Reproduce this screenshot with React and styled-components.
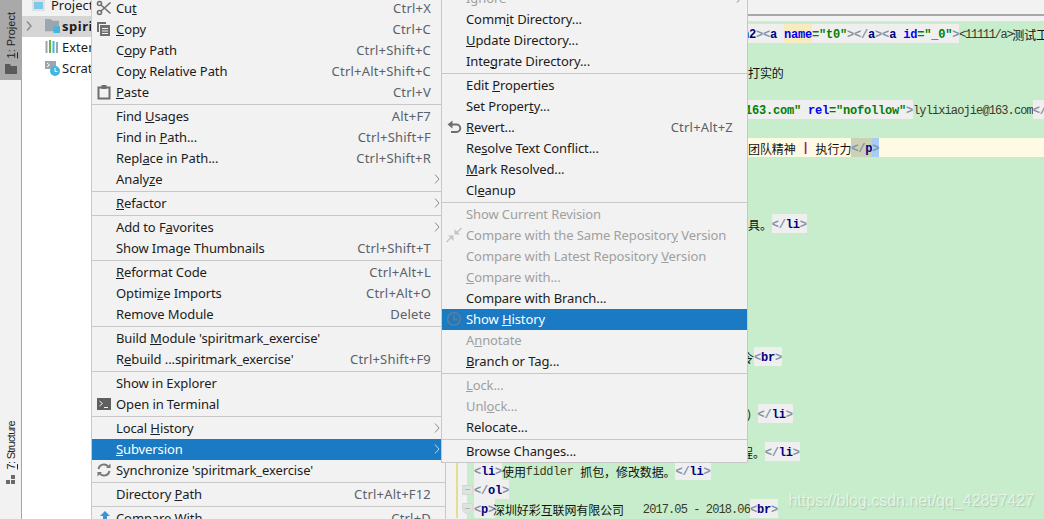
import React from 'react'
import styled, { createGlobalStyle } from 'styled-components'

const GlobalStyle = createGlobalStyle`
  html, body {
    margin: 0;
    padding: 0;
    overflow: hidden;
    background: #f2f2f2;
  }
`

const mainMenu = [
  { label: 'Cu&t', keys: 'Ctrl+X', icon: 'cut' },
  { label: '&Copy', keys: 'Ctrl+C', icon: 'copy' },
  { label: 'C&opy Path', keys: 'Ctrl+Shift+C' },
  { label: 'Cop&y Relative Path', keys: 'Ctrl+Alt+Shift+C' },
  { label: '&Paste', keys: 'Ctrl+V', icon: 'paste' },
  '-',
  { label: 'Find &Usages', keys: 'Alt+F7' },
  { label: 'Find in &Path...', keys: 'Ctrl+Shift+F' },
  { label: 'Repl&ace in Path...', keys: 'Ctrl+Shift+R' },
  { label: 'Analy&ze', arrow: true },
  '-',
  { label: '&Refactor', arrow: true },
  '-',
  { label: 'Add to F&avorites', arrow: true },
  { label: 'Show Image Thumbnails', keys: 'Ctrl+Shift+T' },
  '-',
  { label: '&Reformat Code', keys: 'Ctrl+Alt+L' },
  { label: 'Optimi&ze Imports', keys: 'Ctrl+Alt+O' },
  { label: 'Remove Module', keys: 'Delete' },
  '-',
  { label: "Build &Module 'spiritmark_exercise'" },
  { label: "R&ebuild ...spiritmark_exercise'", keys: 'Ctrl+Shift+F9' },
  '-',
  { label: 'Show in Explorer' },
  { label: 'Open in Terminal', icon: 'terminal' },
  '-',
  { label: 'Local &History', arrow: true },
  { label: '&Subversion', arrow: true, active: true },
  { label: "Synchronize 'spiritmark_exercise'", icon: 'sync' },
  '-',
  { label: 'Directory &Path', keys: 'Ctrl+Alt+F12' },
  '-',
  { label: 'Compare With...', keys: 'Ctrl+D', icon: 'compare' },
]

const subMenu = [
  { label: 'Ignore', arrow: true, off: true },
  { label: 'Comm&it Directory...' },
  { label: '&Update Directory...' },
  { label: 'Inte&grate Directory...' },
  '-',
  { label: 'Edit &Properties' },
  { label: 'Set Proper&ty...' },
  { label: '&Revert...', keys: 'Ctrl+Alt+Z', icon: 'revert' },
  { label: 'Re&solve Text Conflict...' },
  { label: '&Mark Resolved...' },
  { label: 'Cl&eanup' },
  '-',
  { label: 'Show Current Revision', off: true },
  { label: 'Compare with the Same Repositor&y Version', off: true, icon: 'diff' },
  { label: 'Compare with Latest Repository &Version', off: true },
  { label: '&Compare with...', off: true },
  { label: 'Compare with Branch...' },
  { label: 'Show &History', active: true, icon: 'clock' },
  { label: 'A&nnotate', off: true },
  { label: '&Branch or Tag...' },
  '-',
  { label: '&Lock...', off: true },
  { label: 'Unl&ock...', off: true },
  { label: 'Relocate...' },
  '-',
  { label: 'Browse Changes...' },
]

const icons = {
  cut: (
    <svg width="16" height="16" viewBox="0 0 16 16" fill="none" stroke="#6e6e6e" strokeWidth="1.6">
      <circle cx="3.5" cy="3.5" r="2" />
      <circle cx="3.5" cy="12.5" r="2" />
      <path d="M5 5l9.5 8.5M5 11l9.5-8.5" />
    </svg>
  ),
  copy: (
    <svg width="16" height="16" viewBox="0 0 16 16">
      <path d="M1 1h9v2H3v8H1z" fill="#6e6e6e" />
      <path d="M4 4h10v11H4z" fill="#6e6e6e" />
      <path d="M6 7h6v1H6zM6 9.5h6v1H6zM6 12h6v1H6z" fill="#f2f2f2" />
    </svg>
  ),
  paste: (
    <svg width="16" height="16" viewBox="0 0 16 16" fill="none">
      <path d="M2.5 3.5h11v11h-11z" stroke="#6e6e6e" strokeWidth="2" />
      <path d="M5.5 1h5v4h-5z" fill="#6e6e6e" />
    </svg>
  ),
  terminal: (
    <svg width="16" height="16" viewBox="0 0 16 16">
      <path d="M1 2h14v12H1z" fill="#5f5f5f" />
      <path d="M3.5 5l3 2.5-3 2.5" fill="none" stroke="#f2f2f2" />
      <path d="M8 11h4v1H8z" fill="#f2f2f2" />
    </svg>
  ),
  sync: (
    <svg width="16" height="16" viewBox="0 0 16 16" fill="none" stroke="#7a7a7a" strokeWidth="2">
      <path d="M2.5 7a5.5 5.5 0 0 1 9.6-2.6" />
      <path d="M13.5 9a5.5 5.5 0 0 1-9.6 2.6" />
      <path d="M14.5 1.5v4.5H10z" fill="#7a7a7a" stroke="none" />
      <path d="M1.5 14.5V10H6z" fill="#7a7a7a" stroke="none" />
    </svg>
  ),
  compare: (
    <svg width="16" height="16" viewBox="0 0 16 16">
      <path d="M9 1L4 6h3v3h4V6h3z" fill="#3a95d8" />
      <path d="M2 11h6v1.500H2zM2 14h8v1.500H2z" fill="#7a7a7a" />
    </svg>
  ),
  revert: (
    <svg width="16" height="16" viewBox="0 0 16 16" fill="none">
      <path d="M4 5.500h6.500a3.500 3.500 0 0 1 0 7.500H5" stroke="#6e6e6e" strokeWidth="2" />
      <path d="M6.500 1.500v8L1.500 5.500z" fill="#6e6e6e" />
    </svg>
  ),
  diff: (
    <svg width="16" height="16" viewBox="0 0 16 16" fill="#c4c4c4">
      <path d="M15 .5l1 1-5 5-1-1z" />
      <path d="M8.500 7.500V2l5.500 5.500z" />
      <path d="M1 15.500l-1-1 5-5 1 1z" />
      <path d="M7.500 8.500V14L2 8.500z" />
    </svg>
  ),
  clock: (
    <svg width="16" height="16" viewBox="0 0 16 16" fill="none" stroke="#5c7c98" strokeWidth="1.800">
      <circle cx="8" cy="8" r="6.300" />
      <path d="M8 4v4.500h3.500" />
    </svg>
  ),
}

function Mnemonic({ text }) {
  const i = text.indexOf('&')
  if (i < 0) return text
  return (
    <>
      {text.slice(0, i)}
      <Under>{text[i + 1]}</Under>
      {text.slice(i + 2)}
    </>
  )
}

function MenuList({ items, ...rest }) {
  return (
    <Menu {...rest}>
      {items.map((item, i) =>
        item === '-' ? (
          <Separator key={i} />
        ) : (
          <MenuRow key={i} $off={item.off} $active={item.active}>
            <IconCell>{item.icon && icons[item.icon]}</IconCell>
            <span>
              <Mnemonic text={item.label} />
            </span>
            <Keys $active={item.active}>{item.keys}</Keys>
            <ArrowCell>
              {item.arrow && (
                <svg width="6" height="10" viewBox="0 0 6 10" fill="none" stroke={item.active ? '#bcd6ee' : '#8a8a8a'}>
                  <path d="M1 .5L5 5 1 9.500" />
                </svg>
              )}
            </ArrowCell>
          </MenuRow>
        )
      )}
    </Menu>
  )
}

const FoldMark = ({ pentagon }) => (
  <FoldBox>
    <svg width="11" height="12" viewBox="0 0 11 12" fill="#dde3dd" stroke="#d2d8d2">
      <path d={pentagon ? 'M.5.5h10v7l-5 4-5-4z' : 'M.5 1.500h10v9h-10z'} />
      <path d="M3 5.500h5" stroke="#b2b8b2" />
    </svg>
  </FoldBox>
)

function CodeRow({ x, current, fold, children }) {
  return (
    <Row>
      <Gutter>{fold && <FoldMark pentagon={fold === 'open'} />}</Gutter>
      <Code $x={x} $current={current}>
        {children}
      </Code>
    </Row>
  )
}

const Tag = ({ open = '<', name, close = '>', tight }) => (
  <Shade $tight={tight}>
    <T $k="br">{open}</T>
    <T $k="tag">{name}</T>
    <T $k="br">{close}</T>
  </Shade>
)

const emptyRow = (n) => Array.from({ length: n }, (_, i) => <CodeRow key={i} />)

export default function App() {
  return (
    <>
      <GlobalStyle />
      <Page>
        <ToolStrip>
          <ToolTab $active>
            <ToolLabel>
              <Under>1</Under>: Project
            </ToolLabel>
            <svg width="12" height="10" viewBox="0 0 12 10" fill="#5a5a5a">
              <path d="M0 0h5l1 2h6v8H0z" />
            </svg>
          </ToolTab>
          <ToolTab $bottom>
            <ToolLabel $tight>
              <Under>7</Under>: Structure
            </ToolLabel>
            <svg width="10" height="10" viewBox="0 0 10 10" fill="#6a6a6a">
              <path d="M5 0h4v4H5zM0 5h4v4H0zM5 5h4v4H5z" />
            </svg>
          </ToolTab>
        </ToolStrip>

        <ProjectPanel>
          <ProjectHeader>
            <ProjectGlyph />
            Project
          </ProjectHeader>
          <TreeRow $selected>
            <svg width="6" height="10" viewBox="0 0 6 10" fill="none" stroke="#8c8c8c" strokeWidth="1.500">
              <path d="M1 .5L5 5 1 9.500" />
            </svg>
            <svg width="15" height="15" viewBox="0 0 16 16">
              <path d="M0 1h6l2 2h7v11H0z" fill="#9aa7b0" />
              <path d="M9 9h7v7H9z" fill="#40b6e0" />
            </svg>
            <ProjectName>spirit</ProjectName>
          </TreeRow>
          <TreeRow>
            <svg width="15" height="13" viewBox="0 0 14 13">
              <path d="M0 1h2v12H0z" fill="#9aa7b0" />
              <path d="M3.500 0h2v13h-2z" fill="#62b543" />
              <path d="M7 1h2v12H7z" fill="#40b6e0" />
              <path d="M10.500 2h2v11h-2z" fill="#9aa7b0" />
            </svg>
            External Libraries
          </TreeRow>
          <TreeRow>
            <svg width="15" height="16" viewBox="0 0 15 16">
              <path d="M0 1h11v8H0z" fill="#9aa7b0" />
              <path d="M2 3l2.500 2L2 7" fill="none" stroke="#fff" />
              <circle cx="10" cy="11" r="5" fill="#40b6e0" />
              <path d="M10 8v3.500h2.500" fill="none" stroke="#fff" />
            </svg>
            Scratches
          </TreeRow>
        </ProjectPanel>

        <Editor>
          <EditorTabs />
          <CodeArea>
            <CodeRow x={742}>
              <Shade>
                <T $k="tag">h2</T>
                <T $k="br">&gt;&lt;</T>
                <T $k="tag">a </T>
                <NameHit>
                  <T $k="attr">name</T>
                </NameHit>
                <T $k="val">="t0"</T>
                <T $k="br">&gt;&lt;/</T>
                <T $k="tag">a</T>
                <T $k="br">&gt;&lt;</T>
                <T $k="tag">a </T>
                <T $k="attr">id</T>
                <T $k="val">="_0"</T>
                <T $k="br">&gt;</T>
              </Shade>
              <T $k="narrow">&lt;11111/a&gt;</T>
              <Han>测试工</Han>
            </CodeRow>
            <CodeRow />
            <CodeRow x={748}>
              <Han>打实的</Han>
            </CodeRow>
            <CodeRow />
            <CodeRow x={745}>
              <Shade>
                <T $k="val">163.com" </T>
                <T $k="attr">rel</T>
                <T $k="val">="nofollow"</T>
                <T $k="br">&gt;</T>
              </Shade>
              <T $k="plain">lylixiaojie@163.com</T>
              <Shade>
                <T $k="br">&lt;/</T>
                <T $k="tag">a</T>
              </Shade>
            </CodeRow>
            <CodeRow />
            <CodeRow x={748} current>
              <Han>团队精神</Han>
              <Pipe>|</Pipe>
              <Han>执行力</Han>
              <BraceHit>
                <T $k="br">&lt;/</T>
                <T $k="tag">p</T>
              </BraceHit>
              <CaretHit>
                <T $k="br">&gt;</T>
              </CaretHit>
            </CodeRow>
            {emptyRow(3)}
            <CodeRow x={748}>
              <Han>具。</Han>
              <Tag open="</" name="li" />
            </CodeRow>
            {emptyRow(6)}
            <CodeRow x={742}>
              <Han>令</Han>
              <Tag name="br" />
            </CodeRow>
            {emptyRow(2)}
            <CodeRow x={745}>
              <T $k="plain">) </T>
              <Tag open="</" name="li" />
            </CodeRow>
            <CodeRow />
            <CodeRow x={741}>
              <Han>程。</Han>
              <Tag open="</" name="li" />
            </CodeRow>
            <CodeRow x={474}>
              <Tag name="li" />
              <Han>使用</Han>
              <T $k="soft">fiddler </T>
              <Han>抓包，修改数据。</Han>
              <Tag open="</" name="li" />
            </CodeRow>
            <CodeRow x={474} fold="closed">
              <Tag open="</" name="ol" />
            </CodeRow>
            <CodeRow x={474} fold="open">
              <Tag name="p" tight />
              <Han>深圳好彩互联网有限公司</Han>
              <T $k="plain">   2017.05 - 2018.06</T>
              <Tag name="br" />
            </CodeRow>
          </CodeArea>
        </Editor>

        <MainMenu items={mainMenu} />
        <SubMenu items={subMenu} />
        <Watermark>https://blog.csdn.net/qq_42897427</Watermark>
      </Page>
    </>
  )
}

const uiFont = `"Noto Sans", "Liberation Sans", sans-serif`

const Page = styled.div`
  position: relative;
  display: flex;
  width: 1044px;
  height: 519px;
  overflow: hidden;
  font-family: ${uiFont};
  font-size: 13px;
  color: #1c1c1c;
`

const ToolStrip = styled.div`
  display: flex;
  flex-direction: column;
  justify-content: space-between;
  width: 21px;
  border-right: 1px solid #a6a6a6;
  background: #f2f2f2;
`

const ToolTab = styled.div`
  display: flex;
  flex-direction: column;
  align-items: center;
  gap: 6px;
  height: ${(p) => (p.$active ? '68px' : 'auto')};
  padding: ${(p) => (p.$bottom ? '0 0 34px' : '12px 0 0')};
  background: ${(p) => (p.$active ? '#a9a9a9' : 'transparent')};
`

const ToolLabel = styled.span`
  writing-mode: vertical-rl;
  transform: rotate(180deg);
  font-family: "Liberation Sans", sans-serif;
  font-size: 11px;
  line-height: 12px;
  letter-spacing: ${(p) => (p.$tight ? '-0.7px' : '0')};
  color: #222;
`

const ProjectPanel = styled.div`
  width: 424px;
  background: #fff;
`

const ProjectHeader = styled.div`
  display: flex;
  align-items: flex-start;
  gap: 6px;
  height: 16px;
  padding-left: 10px;
  background: #f2f2f2;
  line-height: 10px;
  overflow: hidden;
`

const ProjectGlyph = styled.span`
  width: 9px;
  height: 7px;
  border: 2px solid #e0e0e0;
  background: #7ec8e8;
`

const TreeRow = styled.div`
  display: flex;
  align-items: center;
  gap: 2px;
  height: 21px;
  box-sizing: border-box;
  padding-bottom: 2px;
  padding-left: ${(p) => (p.$selected ? '4px' : '23px')};
  background: ${(p) => (p.$selected ? '#d5d5d5' : 'transparent')};
  svg:first-child {
    margin-right: ${(p) => (p.$selected ? '11px' : '0')};
  }
`

const ProjectName = styled.span`
  font-weight: 700;
  letter-spacing: 0.5px;
`

const Editor = styled.div`
  flex: 1;
  min-width: 0;
  background: #f2f2f2;
`

const EditorTabs = styled.div`
  height: 14px;
  margin-bottom: 5px;
  border-bottom: 2px solid #a8a8a8;
`

const CodeArea = styled.div`
  height: 498px;
  box-sizing: border-box;
  background: linear-gradient(to right, #f2f2f2 21px, #c7edcc 21px);
  padding-top: 3px;
  font-family: "Liberation Mono", monospace;
  font-size: 12px;
`

const Row = styled.div`
  display: grid;
  grid-template-columns: 21px 1fr;
  height: 19px;
`

const Gutter = styled.div`
  position: relative;
  background: linear-gradient(to right, #f2f2f2 10px, #e6de8c 10px, #e6de8c 12px, #f2f2f2 12px);
`

const FoldBox = styled.div`
  position: absolute;
  left: 16px;
  top: 4px;
  line-height: 0;
`

const Code = styled.div`
  display: flex;
  height: 19px;
  line-height: 21px;
  overflow: hidden;
  white-space: pre;
  padding-left: ${(p) => (p.$x ? p.$x - 467 : 0)}px;
  background: ${(p) => (p.$current ? '#fffae3' : 'transparent')};
`

const Shade = styled.span`
  display: flex;
  flex: none;
  background: #efefef;
  margin-right: ${(p) => (p.$tight ? '-2px' : '0')};
`

const NameHit = styled.span`
  display: flex;
  background: #f7ebbf;
`

const BraceHit = styled.span`
  display: flex;
  background: #ccd0b4;
`

const CaretHit = styled.span`
  display: flex;
  background: #a5cdf5;
`

const kinds = {
  tag: 'color: #000080; font-weight: 700; letter-spacing: -0.2px;',
  br: 'color: #8492a6; font-weight: 700; letter-spacing: -0.2px;',
  attr: 'color: #0000ff; font-weight: 700; letter-spacing: -0.2px;',
  val: 'color: #008000; font-weight: 700; letter-spacing: -0.2px;',
  plain: 'color: #3a3a2a; letter-spacing: -0.9px;',
  narrow: 'color: #3a3a2a; letter-spacing: -1.3px;',
  soft: 'color: #3a3a2a; letter-spacing: -0.4px;',
}

const T = styled.span`
  flex: none;
  padding-top: 1px;
  ${(p) => kinds[p.$k]}
`

const Han = styled.span`
  flex: none;
  position: relative;
  font-family: "Noto Sans CJK SC", sans-serif;
  font-size: 12px;
  letter-spacing: -0.1px;
  color: #111;
`

const Pipe = styled.span`
  flex: none;
  width: 20px;
  text-align: center;
  color: #a3127e;
  font-weight: 700;
`

const Menu = styled.div`
  position: absolute;
  display: flex;
  flex-direction: column;
  border: 1px solid #c8c8c8;
  background: #f2f2f2;
`

const MainMenu = styled(MenuList)`
  left: 91px;
  top: -3px;
  width: 353px;
`

const SubMenu = styled(MenuList)`
  left: 441px;
  top: -13px;
  width: 305px;
`

const MenuRow = styled.div`
  display: grid;
  grid-template-columns: 24px 1fr auto 14px;
  align-items: center;
  height: 21px;
  box-sizing: border-box;
  padding-bottom: 2px;
  flex: none;
  white-space: nowrap;
  letter-spacing: -0.1px;
  color: ${(p) => (p.$active ? '#fff' : p.$off ? '#9f9f9f' : '#1c1c1c')};
  background: ${(p) => (p.$active ? '#1a7ac3' : 'transparent')};
`

const IconCell = styled.span`
  display: flex;
  align-items: center;
  padding-left: 4px;
`

const Keys = styled.span`
  letter-spacing: 0.2px;
  color: ${(p) => (p.$active ? '#fff' : '#5a6169')};
`

const ArrowCell = styled.span`
  display: flex;
  align-items: center;
  padding-left: 3px;
`

const Separator = styled.div`
  flex: none;
  height: 1px;
  margin: 1px 0;
  background: #c8c8c8;
`

const Under = styled.span`
  text-decoration: underline;
`

const Watermark = styled.div`
  position: absolute;
  right: 10px;
  bottom: 9px;
  font-family: "Liberation Sans", sans-serif;
  font-size: 16px;
  color: rgba(255, 255, 255, 0.62);
  text-shadow: 1px 1px 1px rgba(120, 140, 120, 0.35);
`
